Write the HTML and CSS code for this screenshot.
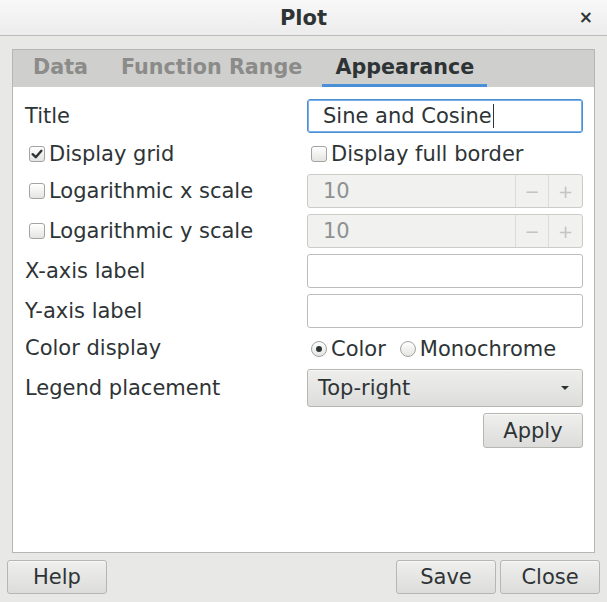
FILE: index.html
```html
<!DOCTYPE html>
<html lang="en">
<head>
<meta charset="utf-8">
<title>Plot</title>
<link rel="stylesheet" href="styles.css">
</head>
<body>
<div class="window">
  <header class="titlebar">
    <span></span>
    <span class="title">Plot</span>
    <span class="close">×</span>
  </header>
  <div class="body">
    <div class="notebook">
      <div class="tabs">
        <div class="tab">Data</div>
        <div class="tab">Function Range</div>
        <div class="tab active">Appearance</div>
      </div>
      <div class="page">
        <div class="label">Title</div>
        <div class="entry focused"><span>Sine and Cosine</span><span class="caret"></span></div>

        <label class="check"><span class="box checked"><svg viewBox="0 0 16 16" width="16" height="16"><path d="M3.6 8.2 L6.8 11.2 L12.4 4.8" fill="none" stroke="#2e3436" stroke-width="2.4" stroke-linecap="round" stroke-linejoin="round"/></svg></span>Display grid</label>
        <label class="check"><span class="box"></span>Display full border</label>

        <label class="check"><span class="box"></span>Logarithmic x scale</label>
        <div class="spin"><span class="val">10</span><span class="sbtn">−</span><span class="sbtn">+</span></div>

        <label class="check"><span class="box"></span>Logarithmic y scale</label>
        <div class="spin"><span class="val">10</span><span class="sbtn">−</span><span class="sbtn">+</span></div>

        <div class="label">X-axis label</div>
        <div class="entry"></div>

        <div class="label">Y-axis label</div>
        <div class="entry"></div>

        <div class="label">Color display</div>
        <div class="radios">
          <label class="radio"><span class="dot checked"></span>Color</label>
          <label class="radio"><span class="dot"></span>Monochrome</label>
        </div>

        <div class="label">Legend placement</div>
        <div class="combo"><span>Top-right</span><span class="arrow"></span></div>

        <div></div>
        <button class="btn apply">Apply</button>
      </div>
    </div>
    <div class="actions">
      <button class="btn">Help</button>
      <span class="spacer"></span>
      <button class="btn">Save</button>
      <button class="btn">Close</button>
    </div>
  </div>
</div>
</body>
</html>
```
FILE: styles.css
```css
html, body {
  margin: 0;
  padding: 0;
}
body {
  width: 607px;
  height: 602px;
  overflow: hidden;
  background: #e8e8e7;
  font-family: "DejaVu Sans", sans-serif;
  font-size: 21px;
  color: #2e3436;
}
.window {
  display: flex;
  flex-direction: column;
  height: 602px;
}
.titlebar {
  height: 35px;
  border-bottom: 1px solid #bcbcbc;
  background: linear-gradient(#f8f8f8, #ececec);
  display: grid;
  grid-template-columns: 1fr auto 1fr;
  align-items: center;
  padding: 0 14px 0 14px;
}
.title {
  font-weight: bold;
  font-size: 21px;
}
.close {
  justify-self: end;
  font-weight: bold;
  font-size: 17px;
  line-height: 1;
}
.body {
  flex: 1;
  display: flex;
  flex-direction: column;
  padding: 13px 7px 8px 7px;
}
.notebook {
  margin: 0 5px;
  height: 504px;
  box-sizing: border-box;
  border: 1px solid #b6b6b3;
  background: #fff;
  display: flex;
  flex-direction: column;
}
.tabs {
  height: 37px;
  background: #cfcfcd;
  display: flex;
  padding-left: 8px;
  gap: 7px;
}
.tab {
  padding: 0 13px;
  display: flex;
  align-items: center;
  font-weight: bold;
  font-size: 20.7px;
  color: #8b8b89;
  box-sizing: border-box;
  border-bottom: 3px solid transparent;
}
.tab:first-child {
  padding-left: 12px;
}
.tab.active {
  color: #2e3436;
  border-bottom-color: #4a90d9;
}
.page {
  flex: 1;
  padding: 12px 11px 0 12px;
  display: grid;
  grid-template-columns: 1fr 276px;
  row-gap: 6px;
  align-content: start;
  align-items: center;
}
.label {
  line-height: 29px;
}
.entry {
  height: 34px;
  box-sizing: border-box;
  border: 1px solid #bdbdba;
  border-radius: 3px;
  background: #fff;
  display: flex;
  align-items: center;
  padding-left: 15px;
}
.entry.focused {
  border-color: #4a90d9;
  box-shadow: inset 0 0 0 1px #7aaee5;
}
.caret {
  display: inline-block;
  width: 1px;
  height: 24px;
  background: #2e3436;
  margin-left: 1px;
}
.check, .radio {
  display: flex;
  align-items: center;
  height: 29px;
  white-space: nowrap;
}
.box, .dot {
  width: 16px;
  height: 16px;
  box-sizing: border-box;
  border: 1px solid #a3a3a0;
  background: linear-gradient(#ffffff, #e4e4e2);
  margin-left: 4px;
  margin-right: 4px;
  flex: none;
}
.box {
  border-radius: 3px;
  position: relative;
}
.box svg {
  position: absolute;
  left: -1px;
  top: -1px;
}
.dot {
  border-radius: 50%;
  display: flex;
  align-items: center;
  justify-content: center;
}
.dot.checked::after {
  content: "";
  width: 6px;
  height: 6px;
  border-radius: 50%;
  background: #2e3436;
}
.radios {
  display: flex;
  gap: 10px;
}
.spin {
  height: 34px;
  box-sizing: border-box;
  border: 1px solid #cbcbc8;
  border-radius: 3px;
  background: #f1f1f0;
  display: flex;
}
.spin .val {
  flex: 1;
  padding-left: 15px;
  display: flex;
  align-items: center;
  color: #8e9192;
}
.sbtn {
  width: 32px;
  border-left: 1px solid #dcdcda;
  display: flex;
  align-items: center;
  justify-content: center;
  color: #c4c4c2;
  font-size: 18px;
}
.sbtn:last-child {
  width: 33px;
}
.combo {
  height: 38px;
  box-sizing: border-box;
  border: 1px solid #b6b6b3;
  border-radius: 3px;
  background: linear-gradient(#eeeeed, #dddddb);
  box-shadow: inset 0 1px #f8f8f8;
  display: flex;
  align-items: center;
  justify-content: space-between;
  padding: 0 13px 0 10px;
}
.arrow {
  width: 0;
  height: 0;
  border-left: 4px solid transparent;
  border-right: 4px solid transparent;
  border-top: 4px solid #2e3436;
}
.btn {
  font-family: inherit;
  font-size: 21px;
  color: #2e3436;
  height: 34px;
  width: 100px;
  box-sizing: border-box;
  border: 1px solid #b6b6b3;
  border-radius: 3px;
  background: linear-gradient(#efefee, #dcdcda);
  box-shadow: inset 0 1px #f8f8f8;
  padding: 0 0 0 0;
}
.apply {
  justify-self: end;
  height: 35px;
}
.actions {
  margin-top: 7px;
  display: flex;
  gap: 4px;
}
.spacer {
  flex: 1;
}
```
